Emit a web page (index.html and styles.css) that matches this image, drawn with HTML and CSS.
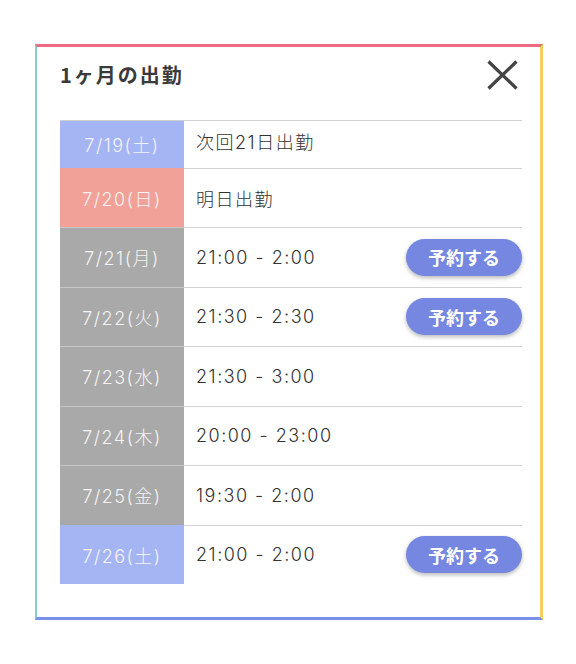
FILE: index.html
```html
<!DOCTYPE html>
<html lang="ja">
<head>
<meta charset="utf-8">
<title>1ヶ月の出勤</title>
<link rel="stylesheet" href="styles.css">
</head>
<body>
<div class="page">
  <section class="modal">
    <header class="modal-head">
      <h2 class="modal-title">1ヶ月の出勤</h2>
      <button class="close" aria-label="閉じる">
        <svg width="31" height="30" viewBox="0 0 31 30"><path d="M1.5 1.5 L29.5 28.5 M29.5 1.5 L1.5 28.5" stroke="#444" stroke-width="3.2" fill="none"/></svg>
      </button>
    </header>
    <div class="schedule">
      <div class="row first">
        <div class="date sat">7/19(土)</div>
        <div class="info"><span>次回21日出勤</span></div>
      </div>
      <div class="row">
        <div class="date sun">7/20(日)</div>
        <div class="info"><span>明日出勤</span></div>
      </div>
      <div class="row">
        <div class="date">7/21(月)</div>
        <div class="info"><span>21:00 - 2:00</span><button class="reserve">予約する</button></div>
      </div>
      <div class="row">
        <div class="date">7/22(火)</div>
        <div class="info"><span>21:30 - 2:30</span><button class="reserve">予約する</button></div>
      </div>
      <div class="row">
        <div class="date">7/23(水)</div>
        <div class="info"><span>21:30 - 3:00</span></div>
      </div>
      <div class="row">
        <div class="date">7/24(木)</div>
        <div class="info"><span>20:00 - 23:00</span></div>
      </div>
      <div class="row">
        <div class="date">7/25(金)</div>
        <div class="info"><span>19:30 - 2:00</span></div>
      </div>
      <div class="row">
        <div class="date sat">7/26(土)</div>
        <div class="info"><span>21:00 - 2:00</span><button class="reserve">予約する</button></div>
      </div>
    </div>
  </section>
</div>
</body>
</html>
```

FILE: styles.css
```css
* { box-sizing: border-box; }
html, body { margin: 0; padding: 0; background: #fff; }
body { font-family: "Noto Sans CJK JP", "Noto Sans", sans-serif; color: #333; }

.page { padding: 44px 0 0 35px; }

.modal {
  width: 508px;
  height: 576px;
  background: #fff;
  border-style: solid;
  border-width: 3px 3px 3px 2px;
  border-color: #ec6b83 #f3cf62 #7b8fe8 #84cfc8;
  padding: 0 18px 0 23px;
  display: flex;
  flex-direction: column;
}

.modal-head {
  height: 56px;
  display: flex;
  align-items: center;
  justify-content: space-between;
  margin-bottom: 17px;
}
.modal-title {
  margin: 0;
  font-size: 20px;
  font-weight: 700;
  color: #3a3a3a;
  letter-spacing: 2px;
  transform: translateY(-1px);
}
.close {
  border: 0;
  background: none;
  padding: 0;
  margin-right: 4px;
  width: 31px;
  height: 30px;
  display: block;
}
.close svg { display: block; }

.schedule { display: flex; flex-direction: column; }

.row {
  display: grid;
  grid-template-columns: 124px 1fr;
  height: 59.5px;
}
.row.first { height: 47.5px; }

.date {
  background: #a9a9a9;
  color: #f4f4f4;
  font-family: "Inter", "Noto Sans CJK JP", sans-serif;
  font-size: 18px;
  font-weight: 300;
  letter-spacing: 1.5px;
  display: flex;
  align-items: center;
  justify-content: center;
  border-top: 1px solid rgba(255,255,255,0.35);
}
.date.sat { background: #a5b5f3; border-top-color: transparent; }
.date.sun { background: #f2a198; border-top-color: transparent; }
.row.first .date { border-top-color: #cfcfcf; }

.info {
  border-top: 1px solid #d2d2d2;
  display: flex;
  align-items: center;
  justify-content: space-between;
  padding-left: 12px;
  font-family: "Inter", "Noto Sans CJK JP", sans-serif;
  font-size: 18px;
  font-weight: 300;
  letter-spacing: 1.5px;
  color: #333;
}
.row.first .info { padding-bottom: 7px; }

.reserve {
  width: 116px;
  height: 37px;
  border: 0;
  border-radius: 19px;
  background: #7587e1;
  color: #fff;
  font-family: "Noto Sans CJK JP", sans-serif;
  font-size: 18px;
  font-weight: 700;
  letter-spacing: 0;
  box-shadow: 0 2px 4px rgba(0,0,0,0.28);
  padding: 0;
}
```
